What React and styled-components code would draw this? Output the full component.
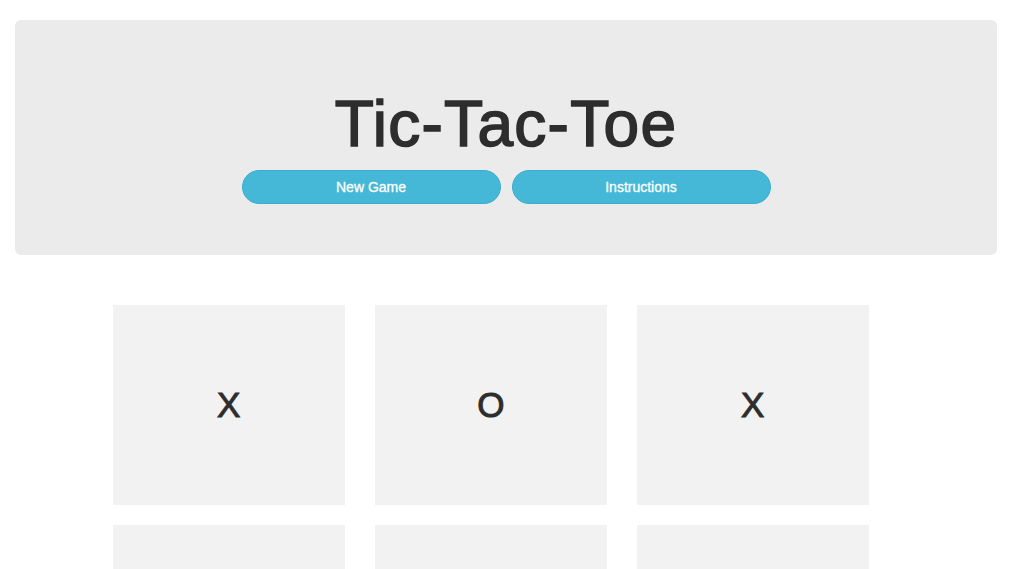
import React from "react";
import styled, { createGlobalStyle } from "styled-components";

const GlobalStyle = createGlobalStyle`
  body {
    margin: 0;
    background: #ffffff;
    font-family: "Liberation Sans", Arial, sans-serif;
    color: #2d2d2d;
  }
`;

const Page = styled.div`
  padding: 20px 14px 0 15px;
`;

const Header = styled.header`
  background: #ebebeb;
  border-radius: 6px;
  padding: 72px 0 51px;
  display: flex;
  flex-direction: column;
  align-items: center;
`;

const Title = styled.h1`
  margin: 0;
  font-size: 64px;
  line-height: 64px;
  font-weight: 400;
  letter-spacing: 1.3px;
  color: #2d2d2d;
  -webkit-text-stroke: 1.6px #2d2d2d;
`;

const ButtonRow = styled.div`
  display: flex;
  gap: 11px;
  margin-top: 14px;
`;

const Button = styled.button`
  width: 259px;
  height: 34px;
  border-radius: 17px;
  border: 1px solid #3cadcd;
  background: #45b8d8;
  color: #ffffff;
  font-family: "Liberation Sans", Arial, sans-serif;
  font-size: 14px;
  -webkit-text-stroke: 0.3px #ffffff;
  cursor: pointer;
`;

const Board = styled.div`
  width: 786px;
  box-sizing: border-box;
  margin: 50px auto 0;
  padding-right: 30px;
  display: grid;
  grid-template-columns: repeat(3, 232px);
  column-gap: 30px;
  row-gap: 20px;
`;

const Cell = styled.div`
  height: 200px;
  background: #f2f2f2;
  display: flex;
  align-items: center;
  justify-content: center;
  font-size: 35px;
  letter-spacing: 0.5px;
  color: #2d2d2d;
  -webkit-text-stroke: 1px #2d2d2d;
`;

const cells = ["X", "O", "X", "", "", "", "", "", ""];

export default function App() {
  return (
    <>
      <GlobalStyle />
      <Page>
        <Header>
          <Title>Tic-Tac-Toe</Title>
          <ButtonRow>
            <Button>New Game</Button>
            <Button>Instructions</Button>
          </ButtonRow>
        </Header>
        <Board>
          {cells.map((mark, i) => (
            <Cell key={i}>{mark}</Cell>
          ))}
        </Board>
      </Page>
    </>
  );
}
